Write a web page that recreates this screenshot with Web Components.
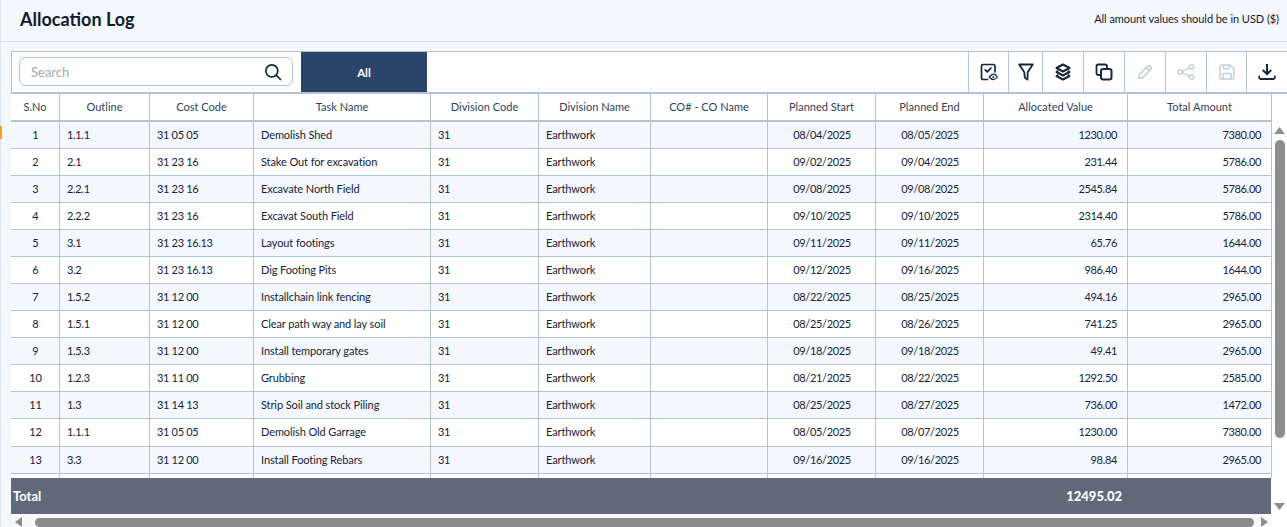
<!DOCTYPE html>
<html><head><meta charset="utf-8"><title>Allocation Log</title>
<style>
html,body{margin:0;height:527px;overflow:hidden;background:#f4f7fb;font-family:Lato,"Liberation Sans",sans-serif}
body{display:flex;flex-direction:column;width:1287px}
</style></head><body>
<log-page>
  <log-header slot="header" note="All amount values should be in USD ($)">Allocation Log</log-header>
  <log-toolbar slot="toolbar"></log-toolbar>
  <log-table slot="table"></log-table>
</log-page>
<script>
const sh=(el,html)=>{el.attachShadow({mode:'open'}).innerHTML=html};
customElements.define('log-page',class extends HTMLElement{constructor(){super();sh(this,`<style>
:host{display:flex;flex-direction:column;height:527px;border-left:1px solid #dde3ea;box-sizing:border-box;position:relative}
.body{display:flex;flex-direction:column;padding:9px 0 0 10px;flex:1;min-height:0}
.mark{position:absolute;left:-1px;top:126px;width:2px;height:13px;background:#f5a11e}
</style><slot name="header"></slot><div class="body"><slot name="toolbar"></slot><slot name="table"></slot></div><div class="mark"></div>`)}});
customElements.define('log-header',class extends HTMLElement{constructor(){super();sh(this,`<style>
:host{display:flex;align-items:center;justify-content:space-between;height:42px;box-sizing:border-box;border-bottom:1px solid #d5dde5;padding:0 8px 3px 19px;color:#101b2e;background:#f4f7fb}
h1{font:700 18px/24px Lato,sans-serif;margin:0}
span{font:400 11px/16px Lato,sans-serif;letter-spacing:-.05px}
</style><h1><slot></slot></h1><span>${this.getAttribute('note')}</span>`)}});
const ic={
review:`<svg width="18" height="18" viewBox="0 0 18 18" fill="none" stroke="#17263c" stroke-width="1.7" stroke-linecap="round" stroke-linejoin="round"><path d="M7.500 16.500H3.200Q1.500 16.500 1.500 14.800V3.200Q1.500 1.500 3.200 1.500h10.100q1.700 0 1.700 1.700V9"/><path d="M5.200 6.800l2 2 3.700-3.700"/><path d="M9.200 14q2.300-2.800 4.400-2.800t3.800 2.800q-1.700 2.600-3.800 2.600T9.200 14z" stroke-width="1.200"/><circle cx="13.400" cy="14" r="1" fill="#17263c" stroke="none"/></svg>`,
filter:`<svg width="16" height="18" viewBox="0 0 16 18" fill="none" stroke="#17263c" stroke-width="1.800" stroke-linejoin="round"><path d="M1.200 1.500h13.600L9.700 9.300 9.400 16.600 6.800 14.600 6.300 9.300z"/></svg>`,
layers:`<svg width="18" height="18" viewBox="0 0 18 18" fill="none" stroke="#17263c" stroke-width="2" stroke-linejoin="round"><path d="M9 1.500 15.500 5 9 8.500 2.500 5z"/><path d="M4.200 7.800 2.500 9 9 12.500 15.500 9l-1.700-1.200"/><path d="M4.200 11.800 2.500 13 9 16.500 15.500 13l-1.700-1.200"/></svg>`,
copy:`<svg width="18" height="18" viewBox="0 0 18 18" fill="none" stroke="#17263c" stroke-width="1.800" stroke-linejoin="round"><path d="M6 12H3.400Q1.500 12 1.500 10.100V3.400Q1.500 1.500 3.400 1.500h6.700Q12 1.500 12 3.400V6"/><rect x="6" y="6" width="10.500" height="10.500" rx="2.200" stroke-width="2"/></svg>`,
edit:`<svg width="16" height="16" viewBox="0 0 16 16" fill="none" stroke="#c3d0dc" stroke-width="1.600" stroke-linejoin="round"><path d="M1.500 14.500 2.400 10.500 10.500 2.200Q11.600 1.100 13 2.200l.9.9Q15 4.400 13.800 5.500L5.600 13.600z"/><path d="M9.200 3.600l3.300 3.300"/></svg>`,
share:`<svg width="18" height="16" viewBox="0 0 18 16" fill="none" stroke="#c3d0dc" stroke-width="1.500"><circle cx="3.200" cy="8" r="2.200"/><circle cx="14.600" cy="2.800" r="2.200"/><circle cx="14.600" cy="13.200" r="2.200"/><path d="M5.200 7.100 12.600 3.700M5.200 8.900l7.400 3.400"/></svg>`,
save:`<svg width="16" height="16" viewBox="0 0 16 16" fill="none" stroke="#c3d0dc" stroke-width="1.500" stroke-linejoin="round"><path d="M2.800 1H11l4 4v8.200Q15 15 13.200 15H2.800Q1 15 1 13.200V2.800Q1 1 2.800 1z"/><path d="M4.500 1v3.800h5.500V1M4 15V9.500h8V15"/></svg>`,
download:`<svg width="18" height="18" viewBox="0 0 18 18" fill="none" stroke="#17263c" stroke-width="2"><path d="M9 1V11M4.800 7 9 11.200 13.200 7"/><path d="M1.200 13.500v1q0 1.500 1.500 1.500h12.600q1.500 0 1.500-1.500v-1" stroke-linecap="round" stroke-width="1.800"/></svg>`,
search:`<svg width="18" height="18" viewBox="0 0 18 18" fill="none" stroke="#17263c" stroke-width="1.700" stroke-linecap="round"><circle cx="7.800" cy="7.800" r="6"/><path d="M12.300 12.300 16.500 16.500"/></svg>`};
customElements.define('log-toolbar',class extends HTMLElement{constructor(){super();
const w=[40,34,41,41,41,41,40,41];
const names=['review','filter','layers','copy','edit','share','save','download'];
sh(this,`<style>
:host{display:flex;height:43px;box-sizing:border-box;border:1px solid #b3c3d3;border-bottom-width:2px;border-right:0;background:#fff;width:1276px;flex:none}
.s{flex:none;padding:5px 8px 0 7px;width:274px}
.box{display:flex;align-items:center;justify-content:space-between;height:29px;width:274px;box-sizing:border-box;border:1px solid #b3c3d3;border-radius:6px;padding:0 10px 0 11px;color:#a3a9b2;font:400 13px Lato,sans-serif}
.tab{width:126px;flex:none;background:#2b4469;color:#fff;font:700 11.500px Lato,sans-serif;display:flex;align-items:center;justify-content:center}
.sp{flex:1}
.b{display:flex;align-items:center;justify-content:center;border-left:1px solid #b3c3d3;box-sizing:border-box;flex:none}
</style><div class="s"><div class="box"><span>Search</span>${ic.search}</div></div>
<div class="tab">All</div><div class="sp"></div>${names.map((n,i)=>`<div class="b" style="width:${w[i]}px">${ic[n]}</div>`).join('')}`)}});
const rows=[
[1,'1.1.1','31 05 05','Demolish Shed','08/04/2025','08/05/2025','1230.00','7380.00'],
[2,'2.1','31 23 16','Stake Out for excavation','09/02/2025','09/04/2025','231.44','5786.00'],
[3,'2.2.1','31 23 16','Excavate North Field','09/08/2025','09/08/2025','2545.84','5786.00'],
[4,'2.2.2','31 23 16','Excavat South Field','09/10/2025','09/10/2025','2314.40','5786.00'],
[5,'3.1','31 23 16.13','Layout footings','09/11/2025','09/11/2025','65.76','1644.00'],
[6,'3.2','31 23 16.13','Dig Footing Pits','09/12/2025','09/16/2025','986.40','1644.00'],
[7,'1.5.2','31 12 00','Installchain link fencing','08/22/2025','08/25/2025','494.16','2965.00'],
[8,'1.5.1','31 12 00','Clear path way and lay soil','08/25/2025','08/26/2025','741.25','2965.00'],
[9,'1.5.3','31 12 00','Install temporary gates','09/18/2025','09/18/2025','49.41','2965.00'],
[10,'1.2.3','31 11 00','Grubbing','08/21/2025','08/22/2025','1292.50','2585.00'],
[11,'1.3','31 14 13','Strip Soil and stock Piling','08/25/2025','08/27/2025','736.00','1472.00'],
[12,'1.1.1','31 05 05','Demolish Old Garrage','08/05/2025','08/07/2025','1230.00','7380.00'],
[13,'3.3','31 12 00','Install Footing Rebars','09/16/2025','09/16/2025','98.84','2965.00']];
const cols=[49,90,104,177,108,112,117,108,108,144,144];
const heads=['S.No','Outline','Cost Code','Task Name','Division Code','Division Name','CO# - CO Name','Planned Start','Planned End','Allocated Value','Total Amount'];
const tri=(d)=>({u:'M0 8 5.500 1 11 8z',d:'M0 1h11L5.500 8z',l:'M8 0v10L1 5z',r:'M1 0v10l7-5z'}[d]);
customElements.define('log-table',class extends HTMLElement{constructor(){super();
const cell=(t,c)=>`<div class="c ${c||''}">${t}</div>`;
const rowH=rows.map((r,i)=>`<div class="r ${i%2?'odd':'even'}" style="height:${i==11?28:27}px">${cell(r[0],'m')}${cell(r[1],'n')}${cell(r[2],'n')}${cell(r[3])}${cell('31','n')}${cell('Earthwork')}${cell('')}${cell(r[4],'m n')}${cell(r[5],'m n')}${cell(r[6],'e n')}${cell(r[7],'e n')}</div>`).join('');
sh(this,`<style>
:host{display:grid;grid-template-columns:1261px 15px;grid-template-rows:1fr 13px;flex:1;min-height:0;width:1276px;background:#fff;color:#14233a;font:400 11px Lato,sans-serif;letter-spacing:-.1px}
.t{display:flex;flex-direction:column;min-height:0;overflow:hidden;background:#fff}
.grid{--cols:${cols.map(x=>x+'px').join(' ')};flex:1;min-height:0;overflow:hidden}
.r,.h{display:grid;grid-template-columns:var(--cols);box-sizing:border-box;border-bottom:1px solid #b3c3d3}
.h{height:28px;border-bottom:2px solid #b3c3d3;background:#fff;color:#2f3f5c;letter-spacing:.02px}
.even{background:#f4f8fc}.odd{background:#fff}
.c{border-right:1px solid #b3c3d3;padding:0 7px 2px;display:flex;align-items:center;white-space:nowrap;min-width:0;height:100%;box-sizing:border-box}
.h .c{justify-content:center;padding:0 0 1px;height:26px}
.n{letter-spacing:-.33px}
.m{justify-content:center;padding-left:8px}.e{justify-content:flex-end;padding-right:10px}
.total{height:36px;width:1260px;flex:none;background:#5f6979;color:#fff;font:700 13px Lato,sans-serif;letter-spacing:0;display:flex;align-items:center;padding-left:2px;box-sizing:border-box}
.total b{margin-left:1025px}
.vs{display:flex;flex-direction:column;align-items:center;background:#fff;padding-top:32px;box-sizing:border-box}
.vs svg{display:block}
.vt{width:10px;height:298px;margin-top:5px;background:#8c8c8c;border-radius:5px}
.vd{margin-top:auto;margin-bottom:3px}
.hs{display:flex;align-items:center;background:#f8f9fb;padding-left:3px;grid-column:1;box-sizing:border-box}
.ht{width:1219px;height:9px;background:#8c8c8c;border-radius:5px;margin-left:12px;margin-top:3px}
.hs svg{margin-top:3px;flex:none}
.hs svg:last-child{margin-left:6px}
.corner{background:#fff}
</style>
<div class="t"><div class="grid"><div class="h">${heads.map(x=>cell(x)).join('')}</div>${rowH}<div class="r odd" style="border:0;height:6px">${cols.map(()=>cell('')).join('')}</div></div>
<div class="total">Total<b>12495.02</b></div></div>
<div class="vs"><svg width="11" height="9"><path fill="#8c8c8c" d="${tri('u')}"/></svg><div class="vt"></div><svg class="vd" width="11" height="9"><path fill="#8c8c8c" d="${tri('d')}"/></svg></div>
<div class="hs"><svg width="9" height="10"><path fill="#8c8c8c" d="${tri('l')}"/></svg><div class="ht"></div><svg width="9" height="10"><path fill="#8c8c8c" d="${tri('r')}"/></svg></div><div class="corner"></div>`)}});
</script></body></html>
